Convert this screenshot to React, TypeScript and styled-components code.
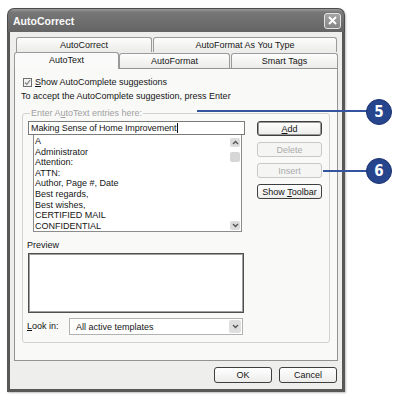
import styled, { createGlobalStyle } from 'styled-components'

const GlobalStyle = createGlobalStyle`
  html, body {
    margin: 0;
    padding: 0;
    background: #ffffff;
  }
  body {
    font-family: 'Liberation Sans', Arial, sans-serif;
    font-size: 9px;
    color: #151515;
  }
  * {
    box-sizing: border-box;
  }
`

const Page = styled.div`
  position: relative;
  width: 400px;
  height: 399px;
  padding: 8px 0 0 7px;
  overflow: hidden;
`

const Dialog = styled.div`
  width: 338px;
  height: 384px;
  display: flex;
  flex-direction: column;
  border-radius: 7px 7px 0 0;
  box-shadow: 1px 1px 2px rgba(0, 0, 0, 0.25);
`

const TitleBar = styled.div`
  height: 24px;
  display: flex;
  align-items: center;
  justify-content: space-between;
  padding: 0 3px 0 5px;
  border: 1px solid #4c4c4c;
  border-bottom: none;
  border-radius: 7px 7px 0 0;
  background: linear-gradient(#9c9c9c 0%, #777 14%, #6d6d6d 60%, #646464 100%);
`

const Title = styled.span`
  font-family: 'Liberation Sans', Arial, sans-serif;
  font-size: 10.5px;
  font-weight: bold;
  color: #fafafa;
`

const CloseButton = styled.div`
  width: 17px;
  height: 16px;
  display: flex;
  align-items: center;
  justify-content: center;
  border: 1px solid #e4e4e4;
  border-radius: 3px;
  background: linear-gradient(#a4a4a4, #858585);
`

const Body = styled.div`
  flex: 1;
  display: flex;
  flex-direction: column;
  background: #eeeeec;
  border: 3px solid #585858;
  border-top: none;
  padding: 5px 4px 6px 4px;
`

const TabRow = styled.div<{ $indent?: number }>`
  height: ${(p) => (p.$indent ? 15 : 16)}px;
  display: flex;
  align-items: flex-end;
  gap: 1px;
  padding-left: ${(p) => p.$indent ?? 0}px;
  position: relative;
  z-index: 1;
`

const Tab = styled.div<{ $width: number; $active?: boolean }>`
  width: ${(p) => p.$width}px;
  height: ${(p) => (p.$active ? 17 : 15)}px;
  margin-bottom: ${(p) => (p.$active ? -1 : 0)}px;
  margin-right: ${(p) => (p.$active ? -1 : 0)}px;
  display: flex;
  align-items: center;
  justify-content: center;
  padding-bottom: ${(p) => (p.$active ? 2 : 0)}px;
  border: 1px solid #9a9a9a;
  border-bottom: none;
  border-radius: 3px 3px 0 0;
  background: ${(p) => (p.$active ? '#fafafa' : 'linear-gradient(#fdfdfd, #ebebe8)')};
  position: relative;
  z-index: ${(p) => (p.$active ? 2 : 1)};
`

const Panel = styled.div`
  height: 293px;
  display: flex;
  flex-direction: column;
  padding: 8px 7px 0 6px;
  border: 1px solid #939393;
  background: #f9f9f8;
`

const CheckRow = styled.div`
  height: 10px;
  display: flex;
  align-items: center;
  gap: 3px;
  padding-left: 2px;
`

const CheckBox = styled.div`
  width: 9px;
  height: 9px;
  display: flex;
  align-items: center;
  justify-content: center;
  border: 1px solid #6f6f6f;
  background: #f4f4f4;
`

const Text = styled.div<{ $muted?: boolean }>`
  line-height: 11px;
  white-space: nowrap;
  color: ${(p) => (p.$muted ? '#9d9d9d' : '#151515')};
`

const Hint = styled(Text)`
  margin-top: 4px;
`

const Group = styled.fieldset`
  margin: 6px 0 0 1px;
  padding: 2px 7px 7px 5px;
  border: 1px solid #d2d2cf;
  border-radius: 3px;
  display: grid;
  grid-template-columns: 217px 65px;
  column-gap: 12px;
  align-items: start;
`

const Legend = styled.legend`
  padding: 0 1px;
  margin-left: 2px;
  line-height: 11px;
  color: #a0a0a0;
`

const LeftColumn = styled.div`
  display: flex;
  flex-direction: column;
`

const EntryInput = styled.div`
  height: 14px;
  display: flex;
  align-items: center;
  padding-left: 2px;
  border: 1px solid #7a7a7a;
  background: #fff;
  letter-spacing: -0.1px;
`

const Caret = styled.span`
  display: inline-block;
  width: 1px;
  height: 10px;
  margin-left: 1px;
  background: #111;
`

const EntryList = styled.div`
  height: 97px;
  margin: 0 3px 0 5px;
  display: flex;
  border: 1px solid #8c8c8c;
  border-top: none;
  background: #fff;
`

const Items = styled.div`
  flex: 1;
  padding: 1px 0 0 1px;
`

const Item = styled.div`
  height: 10.6px;
  line-height: 10.6px;
  white-space: nowrap;
`

const ScrollBar = styled.div`
  width: 11px;
  display: flex;
  flex-direction: column;
  padding: 3px 1px 1px 0;
`

const ScrollButton = styled.div`
  height: 9px;
  display: flex;
  align-items: center;
  justify-content: center;
  border-radius: 2px;
  background: #dcdcdc;
`

const Thumb = styled.div`
  height: 10px;
  margin-top: 5px;
  border-radius: 2px;
  background: #d6d6d6;
`

const Track = styled.div`
  flex: 1;
`

const Label = styled(Text)<{ $top?: number }>`
  margin-top: ${(p) => p.$top ?? 0}px;
  margin-left: -1px;
`

const PreviewBox = styled.div`
  height: 60px;
  width: 216px;
  margin-top: 2px;
  border: 1px solid #4f4f4f;
  box-shadow: inset 0 0 0 1px #a0a0a0;
  background: #fff;
`

const LookRow = styled.div`
  height: 17px;
  margin-top: 5px;
  display: flex;
  align-items: center;
`

const LookLabel = styled(Text)`
  width: 42px;
  margin-left: -1px;
`

const Select = styled.div`
  width: 174px;
  height: 17px;
  display: flex;
  align-items: center;
  justify-content: space-between;
  padding: 0 1px 0 6px;
  border: 1px solid #b2b2b2;
  background: #fff;
`

const DropButton = styled.div`
  width: 12px;
  height: 13px;
  display: flex;
  align-items: center;
  justify-content: center;
  border-radius: 2px;
  background: #dedede;
`

const RightColumn = styled.div`
  display: flex;
  flex-direction: column;
  gap: 6px;
`

const Button = styled.div<{ $default?: boolean; $disabled?: boolean; $w?: number; $h?: number }>`
  width: ${(p) => p.$w ?? 65}px;
  height: ${(p) => p.$h ?? 15}px;
  display: flex;
  align-items: center;
  justify-content: center;
  border: 1px solid ${(p) => (p.$disabled ? '#c8c8c8' : '#3f3f3f')};
  border-radius: 3px;
  box-shadow: ${(p) => (p.$default ? 'inset 0 0 0 1px #9a9a9a' : 'none')};
  background: ${(p) => (p.$disabled ? '#f5f5f4' : 'linear-gradient(#ffffff, #ececea)')};
  color: ${(p) => (p.$disabled ? '#ababab' : '#151515')};
  white-space: nowrap;
`

const Footer = styled.div`
  margin-top: 6px;
  padding-right: 1px;
  display: flex;
  justify-content: flex-end;
  gap: 7px;
`

const CalloutLine = styled.div<{ $left: number; $top: number; $width: number }>`
  position: absolute;
  left: ${(p) => p.$left}px;
  top: ${(p) => p.$top}px;
  width: ${(p) => p.$width}px;
  height: 2px;
  background: #3454a0;
`

const Callout = styled.div<{ $top: number }>`
  position: absolute;
  left: 366px;
  top: ${(p) => p.$top}px;
  width: 26px;
  height: 26px;
  border-radius: 50%;
  display: flex;
  align-items: center;
  justify-content: center;
  background: #26458d;
  border: 1px solid #1b3270;
  color: #fff;
  font-family: 'DejaVu Sans Condensed', 'Liberation Sans', sans-serif;
  font-weight: bold;
  font-size: 15px;
`

const Chevron = ({ up }: { up?: boolean }) => (
  <svg width="7" height="5" viewBox="0 0 7 5">
    <polyline
      points={up ? '1,4 3.5,1.5 6,4' : '1,1 3.5,3.5 6,1'}
      fill="none"
      stroke="#555"
      strokeWidth="1.4"
    />
  </svg>
)

const entries = [
  'A',
  'Administrator',
  'Attention:',
  'ATTN:',
  'Author, Page #, Date',
  'Best regards,',
  'Best wishes,',
  'CERTIFIED MAIL',
  'CONFIDENTIAL',
]

export default function App() {
  return (
    <Page>
      <GlobalStyle />
      <Dialog>
        <TitleBar>
          <Title>AutoCorrect</Title>
          <CloseButton>
            <svg width="9" height="9" viewBox="0 0 9 9">
              <path d="M1 1 L8 8 M8 1 L1 8" stroke="#fff" strokeWidth="2" />
            </svg>
          </CloseButton>
        </TitleBar>
        <Body>
          <TabRow $indent={2}>
            <Tab $width={136}>AutoCorrect</Tab>
            <Tab $width={184}>AutoFormat As You Type</Tab>
          </TabRow>
          <TabRow>
            <Tab $width={105} $active>
              AutoText
            </Tab>
            <Tab $width={111}>AutoFormat</Tab>
            <Tab $width={107}>Smart Tags</Tab>
          </TabRow>
          <Panel>
            <CheckRow>
              <CheckBox>
                <svg width="7" height="7" viewBox="0 0 7 7">
                  <polyline points="1,3.5 2.8,5.5 6,1.2" fill="none" stroke="#8a8a8a" strokeWidth="1.3" />
                </svg>
              </CheckBox>
              <Text>
                <u>S</u>how AutoComplete suggestions
              </Text>
            </CheckRow>
            <Hint>To accept the AutoComplete suggestion, press Enter</Hint>
            <Group>
              <Legend>
                Enter A<u>u</u>toText entries here:
              </Legend>
              <LeftColumn>
                <EntryInput>
                  Making Sense of Home Improvement
                  <Caret />
                </EntryInput>
                <EntryList>
                  <Items>
                    {entries.map((e) => (
                      <Item key={e}>{e}</Item>
                    ))}
                  </Items>
                  <ScrollBar>
                    <ScrollButton>
                      <Chevron up />
                    </ScrollButton>
                    <Thumb />
                    <Track />
                    <ScrollButton>
                      <Chevron />
                    </ScrollButton>
                  </ScrollBar>
                </EntryList>
                <Label $top={8}>Preview</Label>
                <PreviewBox />
                <LookRow>
                  <LookLabel>
                    <u>L</u>ook in:
                  </LookLabel>
                  <Select>
                    <span>All active templates</span>
                    <DropButton>
                      <Chevron />
                    </DropButton>
                  </Select>
                </LookRow>
              </LeftColumn>
              <RightColumn>
                <Button $default>
                  <span>
                    <u>A</u>dd
                  </span>
                </Button>
                <Button $disabled>Delete</Button>
                <Button $disabled>Insert</Button>
                <Button>
                  <span>
                    Show <u>T</u>oolbar
                  </span>
                </Button>
              </RightColumn>
            </Group>
          </Panel>
          <Footer>
            <Button $w={58} $h={16}>
              OK
            </Button>
            <Button $w={58} $h={16}>
              Cancel
            </Button>
          </Footer>
        </Body>
      </Dialog>
      <CalloutLine $left={197} $top={110} $width={170} />
      <Callout $top={99}>5</Callout>
      <CalloutLine $left={323} $top={170} $width={44} />
      <Callout $top={158}>6</Callout>
    </Page>
  )
}
